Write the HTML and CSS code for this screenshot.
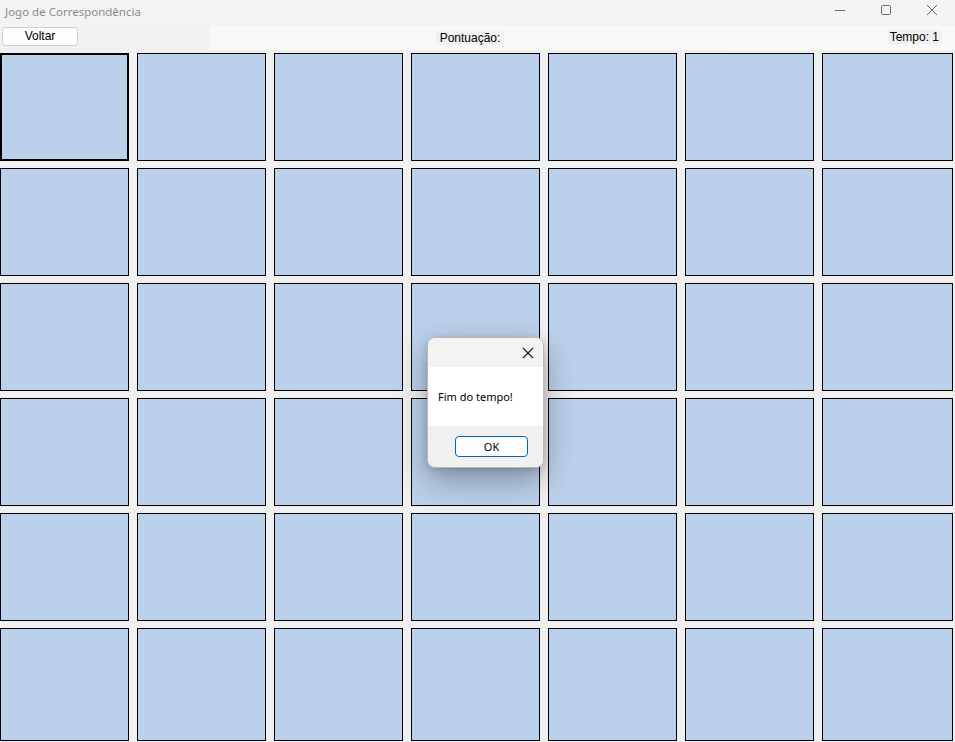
FILE: index.html
```html
<!DOCTYPE html>
<html lang="pt">
<head>
<meta charset="utf-8">
<title>Jogo de Correspondência</title>
<link rel="stylesheet" href="styles.css">
</head>
<body>
<div class="window">
  <div class="titlebar">
    <span class="title">Jogo de Correspondência</span>
    <div class="controls">
      <span class="ctl"><svg width="12" height="12" viewBox="0 0 12 12"><path d="M1 6.5h10" stroke="#6f6f6f" stroke-width="1"/></svg></span>
      <span class="ctl"><svg width="12" height="12" viewBox="0 0 12 12"><rect x="1.5" y="1.5" width="9" height="9" rx="1" fill="none" stroke="#6f6f6f" stroke-width="1"/></svg></span>
      <span class="ctl"><svg width="12" height="12" viewBox="0 0 12 12"><path d="M1 1L11 11M11 1L1 11" stroke="#6f6f6f" stroke-width="1"/></svg></span>
    </div>
  </div>
  <div class="toolbar">
    <div class="tb-left"><button class="btn-back">Voltar</button></div>
    <div class="tb-mid"><span class="lbl lbl-score">Pontuação:</span></div>
    <div class="tb-right"><span class="lbl lbl-time">Tempo: 1</span></div>
  </div>
  <div class="board">
    <div class="card focused"></div><div class="card"></div><div class="card"></div><div class="card"></div><div class="card"></div><div class="card"></div><div class="card"></div>
    <div class="card"></div><div class="card"></div><div class="card"></div><div class="card"></div><div class="card"></div><div class="card"></div><div class="card"></div>
    <div class="card"></div><div class="card"></div><div class="card"></div><div class="card"></div><div class="card"></div><div class="card"></div><div class="card"></div>
    <div class="card"></div><div class="card"></div><div class="card"></div><div class="card"></div><div class="card"></div><div class="card"></div><div class="card"></div>
    <div class="card"></div><div class="card"></div><div class="card"></div><div class="card"></div><div class="card"></div><div class="card"></div><div class="card"></div>
    <div class="card"></div><div class="card"></div><div class="card"></div><div class="card"></div><div class="card"></div><div class="card"></div><div class="card"></div>
  </div>
  <div class="dialog">
    <div class="dlg-head">
      <span class="dlg-close"><svg width="12" height="12" viewBox="0 0 12 12"><path d="M1 1L11 11M11 1L1 11" stroke="#1a1a1a" stroke-width="1.1"/></svg></span>
    </div>
    <div class="dlg-body">Fim do tempo!</div>
    <div class="dlg-foot"><button class="btn-ok">OK</button></div>
  </div>
</div>
</body>
</html>
```
FILE: styles.css
```css
* { box-sizing: border-box; }
html, body { margin: 0; padding: 0; }
body { background: #f0f0f0; }
.window {
  position: relative;
  width: 955px;
  height: 742px;
  display: flex;
  flex-direction: column;
  background: #f0f0f0;
  overflow: hidden;
}
.titlebar {
  height: 26px;
  background: #f3f3f3;
  display: flex;
  align-items: center;
  justify-content: space-between;
}
.title {
  font-family: "Noto Sans", "Open Sans", sans-serif;
  font-size: 11.5px;
  color: #8c8c8c;
  padding-left: 5px;
  padding-bottom: 4px;
}
.controls { display: flex; height: 26px; }
.ctl {
  width: 46px;
  display: flex;
  align-items: center;
  justify-content: center;
  padding-bottom: 6px;
}
.toolbar {
  height: 24px;
  display: grid;
  grid-template-columns: 210px 520px 1fr;
  font-family: "Liberation Sans", Arial, sans-serif;
  font-size: 12px;
  color: #000;
}
.tb-left { background: #f1f1f1; display: flex; align-items: flex-start; padding: 1px 0 0 2px; }
.tb-mid { background: #f8f8f8; display: flex; justify-content: center; padding-top: 5px; }
.tb-right { background: #f9f9f9; display: flex; justify-content: flex-end; padding: 4px 13px 0 0; }
.btn-back {
  width: 76px;
  height: 19px;
  margin: 0;
  padding: 0;
  border: 1px solid #d0d0d0;
  border-radius: 4px;
  background: #fdfdfd;
  font-family: "Liberation Sans", Arial, sans-serif;
  font-size: 12px;
  color: #000;
  line-height: 17px;
}
.lbl {
  background: #f0f0f0;
  height: 14px;
  line-height: 14px;
  display: block;
}
.lbl-score { padding: 0 4px; }
.lbl-time { padding: 0 3px 0 2px; }
.board {
  flex: 1;
  padding-top: 3px;
  display: grid;
  grid-template-columns: repeat(6, 129px) 131px;
  grid-template-rows: repeat(5, 108px) 113px;
  column-gap: 8px;
  row-gap: 7px;
  align-content: start;
}
.card {
  background: #bbd0ea;
  border: 1px solid #000;
}
.card.focused { border-width: 2px; }
.dialog {
  position: absolute;
  left: 427px;
  top: 337px;
  width: 117px;
  height: 131px;
  border-radius: 8px;
  border: 1px solid #b9b9b9;
  overflow: hidden;
  display: flex;
  flex-direction: column;
  box-shadow: 0 12px 32px rgba(0, 0, 0, 0.32), 0 2px 6px rgba(0, 0, 0, 0.15);
  font-family: "Noto Sans", "Open Sans", sans-serif;
  font-size: 11px;
  color: #000;
}
.dlg-head {
  height: 29px;
  background: #f3f3f3;
  display: flex;
  justify-content: flex-end;
  align-items: center;
  padding-right: 9px;
}
.dlg-close { display: flex; }
.dlg-body {
  height: 59px;
  background: #ffffff;
  display: flex;
  align-items: center;
  padding-left: 10px;
  padding-bottom: 1px;
}
.dlg-foot {
  flex: 1;
  background: #f0f0f0;
  display: flex;
  justify-content: flex-end;
  align-items: flex-start;
  padding: 10px 15px 0 0;
}
.btn-ok {
  width: 73px;
  height: 21px;
  margin: 0;
  padding: 0;
  border: 1px solid #0067c0;
  border-radius: 4px;
  background: #fdfdfd;
  font-family: "Noto Sans", "Open Sans", sans-serif;
  font-size: 11px;
  color: #000;
  line-height: 19px;
}
```
